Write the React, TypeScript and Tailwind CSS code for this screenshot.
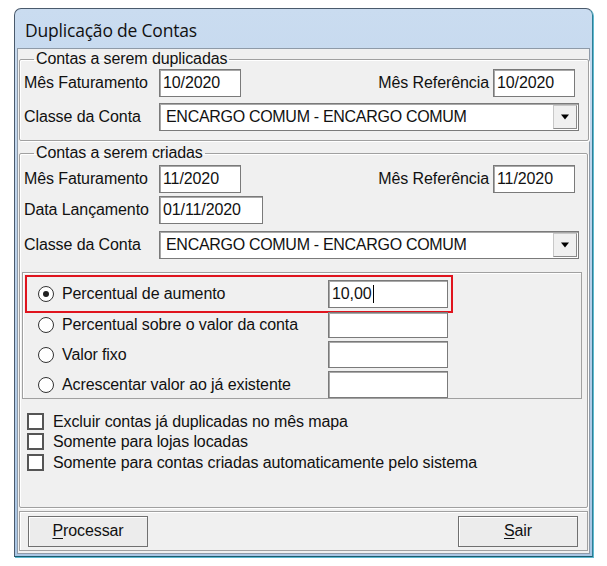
import React from "react";

const TXT = "font-['Liberation_Sans',Arial,sans-serif] text-[16px] text-[#111] tracking-[-0.1px]";

function Field({ w, value, h = 28, caret = false }: { w: number; value?: string; h?: number; caret?: boolean }) {
  return (
    <div
      className="bg-white border border-[#7a7a7a] shadow-[inset_1px_1px_0_#a8a8a8] flex items-center pl-[3px] leading-none"
      style={{ width: w, height: h }}
    >
      <span className="text-[16px]">{value}</span>
      {caret && <span className="w-px h-[18px] bg-black ml-[1px]" />}
    </div>
  );
}

function Combo({ value }: { value: string }) {
  return (
    <div className="flex-1 h-[28px] bg-white border border-[#7a7a7a] shadow-[inset_1px_1px_0_#a8a8a8] flex items-center">
      <span className="flex-1 pl-[6px] tracking-[-0.3px]">{value}</span>
      <div className="w-[24px] h-[24px] mr-[1px] bg-[#f0f0f0] border border-[#c8c8c8] border-r-[#8a8a8a] border-b-[#8a8a8a] flex items-center justify-center">
        <svg width="10" height="6" viewBox="0 0 10 6">
          <path d="M1 0.5h8L5 5.5z" fill="#000" />
        </svg>
      </div>
    </div>
  );
}

function Radio({ checked }: { checked?: boolean }) {
  return (
    <div className="w-[16px] h-[16px] rounded-full border-[1.5px] border-[#333] bg-white flex items-center justify-center">
      {checked && <div className="w-[6px] h-[6px] rounded-full bg-[#222]" />}
    </div>
  );
}

function Check() {
  return <div className="w-[17px] h-[17px] border-[2px] border-[#555] bg-white" />;
}

export default function App() {
  return (
    <div className={`w-[607px] h-[566px] bg-white ${TXT}`}>
      <div className="ml-[14px] mt-[8px] w-[579px] h-[549px] rounded-t-[7px] border border-[#4a5a6c] border-b-[#1b5c6e] border-r-[#2d7f96] bg-gradient-to-b from-[#cadcf0] to-[#aac6e4] flex flex-col shadow-[1px_1px_0_#5fb8d0]">
        <div className="h-[39px] flex items-center pl-[10px] pt-[3px] font-['Open_Sans','Noto_Sans',sans-serif] text-[17.5px] tracking-[-0.2px] text-[#111]">
          Duplicação de Contas
        </div>
        <div className="mx-[2px] mb-[2px] flex-1 bg-[#f0f0f0] border border-[#8e9aa8] flex flex-col">
          {/* Group 1 */}
          <fieldset className="ml-[1px] mr-[0px] border border-[#a0a0a0] shadow-[inset_1px_1px_0_#fff,1px_1px_0_#fff] pl-[4px] pr-[9px] pb-[9px] rounded-[2px]">
            <legend className="ml-[10px] px-[2px] leading-[20px]">Contas a serem duplicadas</legend>
            <div className="flex items-center h-[28px] mt-[0px]">
              <span className="w-[135px]">Mês Faturamento</span>
              <Field w={82} value="10/2020" />
              <div className="flex-1" />
              <span className="mr-[4px]">Mês Referência</span>
              <Field w={82} value="10/2020" />
              <div className="w-[4px]" />
            </div>
            <div className="flex items-center h-[28px] mt-[6px]">
              <span className="w-[135px]">Classe da Conta</span>
              <Combo value="ENCARGO COMUM - ENCARGO COMUM" />
            </div>
          </fieldset>

          {/* Group 2 */}
          <fieldset className="ml-[1px] mt-[2px] mr-[1px] border border-[#a0a0a0] shadow-[inset_1px_1px_0_#fff,1px_1px_0_#fff] pl-[4px] pr-[8px] pb-[0px] rounded-[2px] h-[365px]">
            <legend className="ml-[10px] px-[2px] leading-[20px]">Contas a serem criadas</legend>
            <div className="flex items-center h-[28px] mt-[2px]">
              <span className="w-[135px]">Mês Faturamento</span>
              <Field w={82} value="11/2020" />
              <div className="flex-1" />
              <span className="mr-[4px]">Mês Referência</span>
              <Field w={82} value="11/2020" />
              <div className="w-[4px]" />
            </div>
            <div className="flex items-center h-[28px] mt-[3px]">
              <span className="w-[135px]">Data Lançamento</span>
              <Field w={104} value="01/11/2020" />
            </div>
            <div className="flex items-center h-[28px] mt-[7px]">
              <span className="w-[135px]">Classe da Conta</span>
              <Combo value="ENCARGO COMUM - ENCARGO COMUM" />
            </div>

            {/* Radio panel */}
            <div className="-ml-[2px] mr-[-3px] mt-[13px] h-[127px] border border-[#a0a0a0] shadow-[inset_1px_1px_0_#fff] flex flex-col pt-[2px] pl-[2px]">
              <div className="w-[428px] h-[38px] border-2 border-[#e0141e] flex items-center">
                <div className="w-[301px] flex items-center pl-[11px] gap-[8px]">
                  <Radio checked />
                  <span>Percentual de aumento</span>
                </div>
                <Field w={120} value="10,00" caret />
              </div>
              <div className="flex items-center h-[26px] mt-[-1px]">
                <div className="w-[303px] flex items-center pl-[13px] gap-[8px]">
                  <Radio />
                  <span>Percentual sobre o valor da conta</span>
                </div>
                <Field w={120} h={26} />
              </div>
              <div className="flex items-center h-[27px] mt-[3px]">
                <div className="w-[303px] flex items-center pl-[13px] gap-[8px]">
                  <Radio />
                  <span>Valor fixo</span>
                </div>
                <Field w={120} h={27} />
              </div>
              <div className="flex items-center h-[27px] mt-[3px]">
                <div className="w-[303px] flex items-center pl-[13px] gap-[8px]">
                  <Radio />
                  <span>Acrescentar valor ao já existente</span>
                </div>
                <Field w={120} h={27} />
              </div>
            </div>

            {/* Checkboxes */}
            <div className="flex flex-col mt-[13px] pl-[3px]">
              <div className="flex items-center h-[19px] gap-[9px]">
                <Check />
                <span>Excluir contas já duplicadas no mês mapa</span>
              </div>
              <div className="flex items-center h-[19px] gap-[9px] mt-[1px]">
                <Check />
                <span>Somente para lojas locadas</span>
              </div>
              <div className="flex items-center h-[19px] gap-[9px] mt-[2px]">
                <Check />
                <span>Somente para contas criadas automaticamente pelo sistema</span>
              </div>
            </div>
          </fieldset>

          {/* Buttons panel */}
          <div className="ml-[1px] mr-[1px] mt-[3px] mb-[2px] flex-1 border border-[#a0a0a0] shadow-[inset_1px_1px_0_#fff] flex items-center justify-between pl-[8px] pr-[9px]">
            <button className="w-[120px] h-[31px] border border-[#707070] bg-[#ececec] shadow-[inset_1px_1px_0_#fff] text-[16px]">
              <span className="underline underline-offset-2">P</span>rocessar
            </button>
            <button className="w-[120px] h-[31px] border border-[#707070] bg-[#ececec] shadow-[inset_1px_1px_0_#fff] text-[16px]">
              <span className="underline underline-offset-2">S</span>air
            </button>
          </div>
        </div>
      </div>
    </div>
  );
}
